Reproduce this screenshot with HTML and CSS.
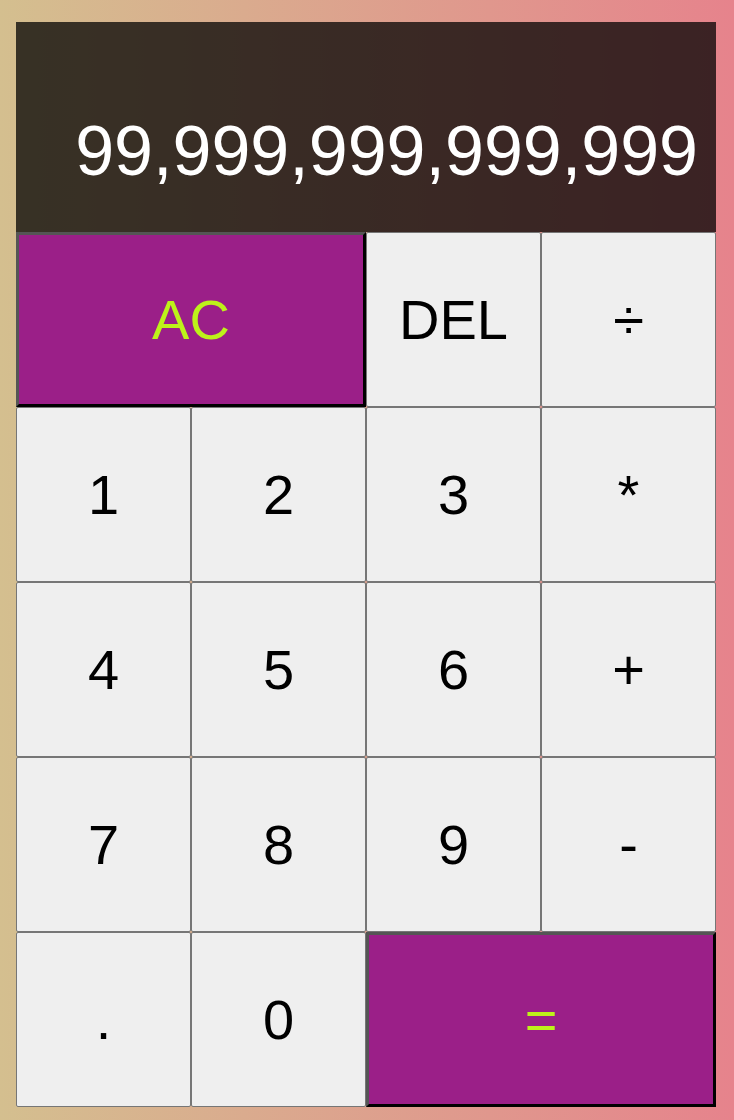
FILE: index.html
```html
<!DOCTYPE html>
<html lang="en">
<head>
<meta charset="utf-8">
<title>Calculator</title>
<link rel="stylesheet" href="styles.css">
</head>
<body>
<div class="calculator-grid">
  <div class="output">
    <div class="previous-operand"></div>
    <div class="current-operand">99,999,999,999,999</div>
  </div>
  <button class="btn span-two accent">AC</button>
  <button class="btn">DEL</button>
  <button class="btn">÷</button>
  <button class="btn">1</button>
  <button class="btn">2</button>
  <button class="btn">3</button>
  <button class="btn">*</button>
  <button class="btn">4</button>
  <button class="btn">5</button>
  <button class="btn">6</button>
  <button class="btn">+</button>
  <button class="btn">7</button>
  <button class="btn">8</button>
  <button class="btn">9</button>
  <button class="btn">-</button>
  <button class="btn">.</button>
  <button class="btn">0</button>
  <button class="btn span-two accent">=</button>
</div>
</body>
</html>
```
FILE: styles.css
```css
*, *::before, *::after {
  box-sizing: border-box;
  font-family: "Liberation Sans", Arial, sans-serif;
  font-weight: normal;
}

html, body {
  margin: 0;
  padding: 0;
}

body {
  min-height: 1120px;
  background: linear-gradient(to right, #d4bf8f, #e6838c);
}

.calculator-grid {
  display: grid;
  grid-template-columns: repeat(4, 175px);
  grid-template-rows: minmax(210px, auto) repeat(5, 175px);
  padding: 22px 0 0 16px;
}

.output {
  grid-column: 1 / -1;
  background-color: rgba(0, 0, 0, 0.74);
  display: flex;
  flex-direction: column;
  align-items: flex-end;
  justify-content: space-around;
  padding: 17.5px 18px;
  word-wrap: break-word;
  word-break: break-all;
}

.current-operand {
  color: #fff;
  font-size: 70px;
}

.previous-operand {
  color: rgba(255, 255, 255, 0.75);
  font-size: 42px;
}

.btn {
  cursor: pointer;
  font-size: 56px;
  color: #000;
  background-color: #efefef;
  border: 1px solid #767676;
  border-radius: 2px;
  padding: 0;
  outline: none;
}

.span-two {
  grid-column: span 2;
}

.accent {
  background-color: #9b1f88;
  color: #bdf21a;
  border-width: 3px;
  border-style: solid;
  border-color: #555 #000 #000 #555;
  border-radius: 0;
}
```
